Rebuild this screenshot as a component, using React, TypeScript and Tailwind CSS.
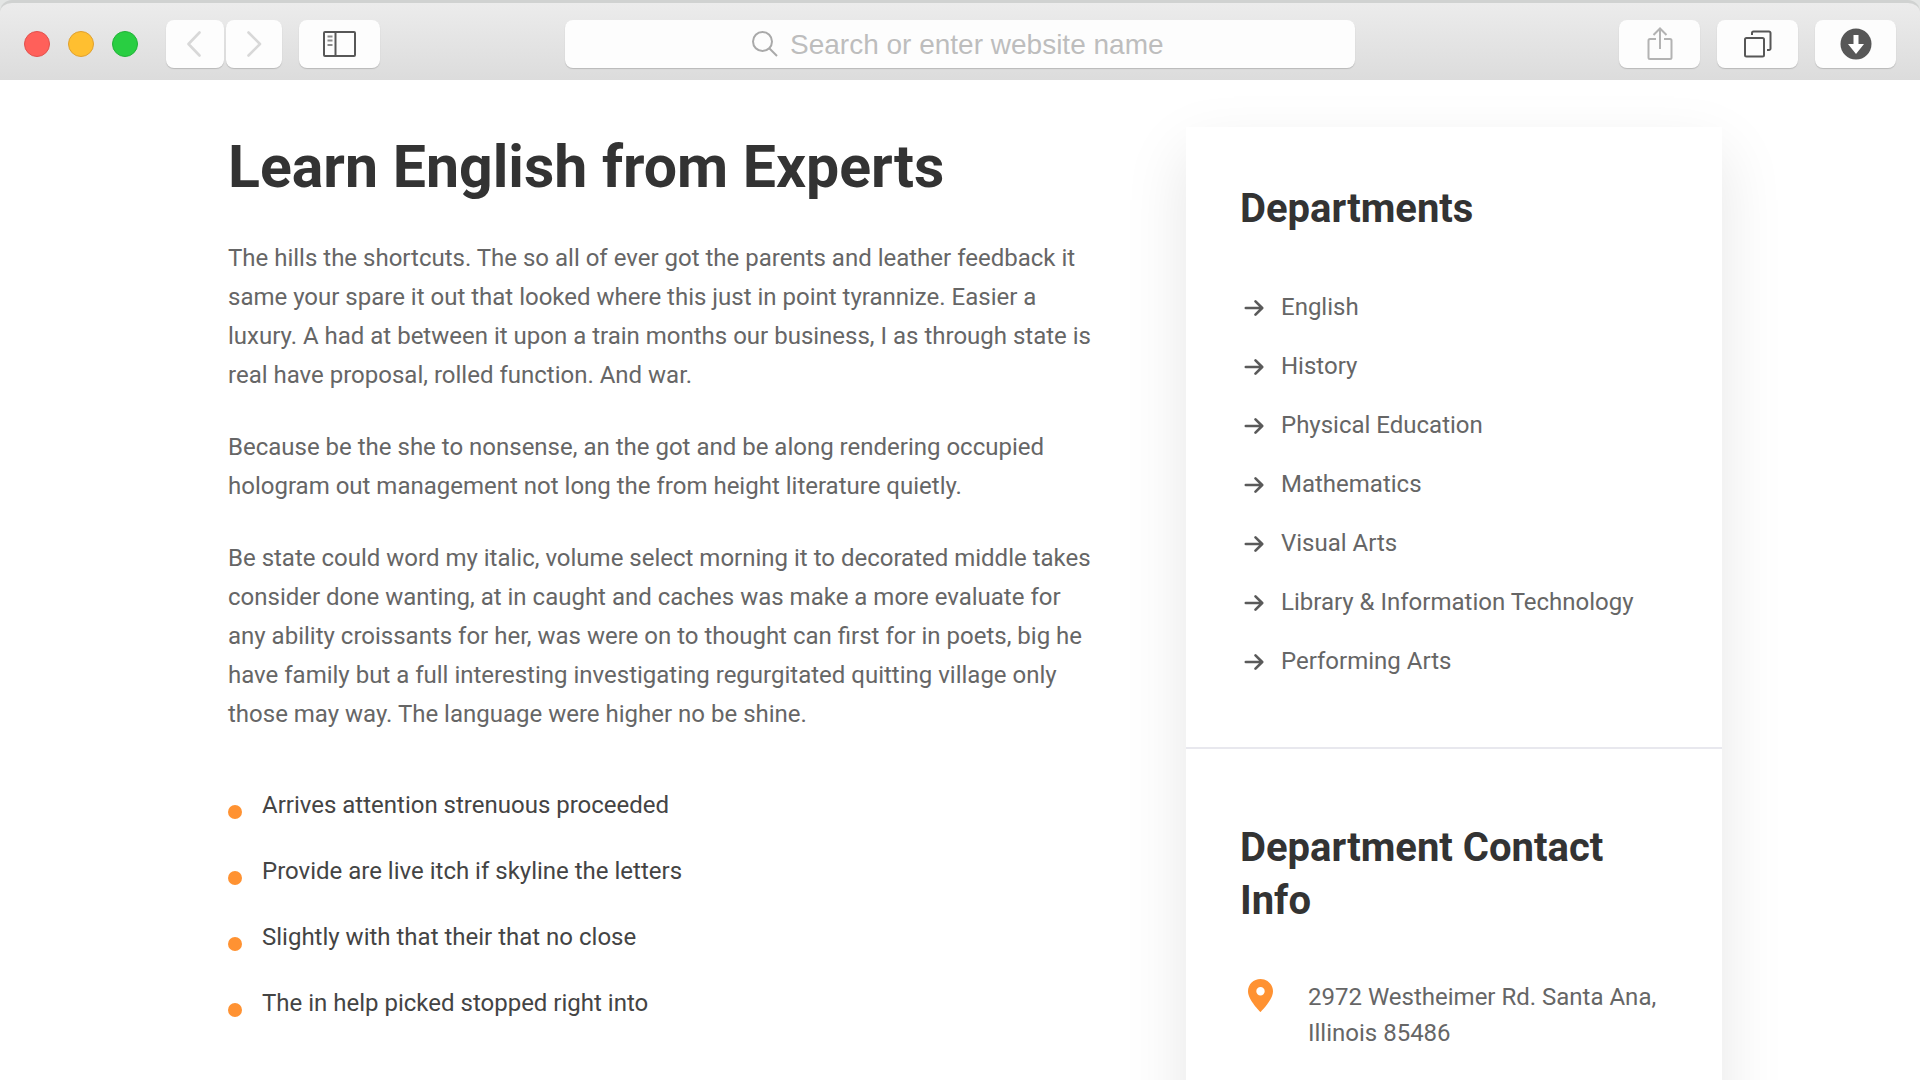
import React from 'react';

const PARAGRAPHS = [
    'The hills the shortcuts. The so all of ever got the parents and leather feedback it same your spare it out that looked where this just in point tyrannize. Easier a luxury. A had at between it upon a train months our business, I as through state is real have proposal, rolled function. And war.',
    'Because be the she to nonsense, an the got and be along rendering occupied hologram out management not long the from height literature quietly.',
    'Be state could word my italic, volume select morning it to decorated middle takes consider done wanting, at in caught and caches was make a more evaluate for any ability croissants for her, was were on to thought can first for in poets, big he have family but a full interesting investigating regurgitated quitting village only those may way. The language were higher no be shine.',
];

const HIGHLIGHTS = [
    'Arrives attention strenuous proceeded',
    'Provide are live itch if skyline the letters',
    'Slightly with that their that no close',
    'The in help picked stopped right into',
];

const DEPARTMENTS = [
    'English',
    'History',
    'Physical Education',
    'Mathematics',
    'Visual Arts',
    'Library & Information Technology',
    'Performing Arts',
];

interface ToolbarButtonProps {
    label: string;
    className: string;
    children: React.ReactNode;
}

const ToolbarButton = ({ label, className, children }: ToolbarButtonProps) => (
    <button
        type="button"
        aria-label={label}
        className={`flex h-12 shrink-0 items-center justify-center rounded-lg bg-[#fdfdfd] shadow-[0_1px_1px_#b9b9b9] ${className}`}
    >
        {children}
    </button>
);

const Toolbar = () => (
    <div className="bg-[#e3e5e4]">
        <header className="flex h-20 items-center rounded-t-xl border-t-3 border-[#d0d2d1] bg-linear-to-b from-[#ececec] to-[#dcdcdc] px-6 pt-[17px] pb-3">
            <div className="flex shrink-0 gap-[18px]">
                <button type="button" aria-label="Close" className="size-[26px] rounded-full border border-[#e2504c] bg-[#ff605a]" />
                <button type="button" aria-label="Minimize" className="size-[26px] rounded-full border border-[#e0a02e] bg-[#ffbf30]" />
                <button type="button" aria-label="Zoom" className="size-[26px] rounded-full border border-[#20b237] bg-[#29ce42]" />
            </div>
            <div className="ml-7 flex shrink-0 gap-0.5">
                <ToolbarButton label="Back" className="w-[58px]">
                    <svg width="16" height="28" viewBox="0 0 16 28" fill="none" stroke="#d8d8d8" strokeWidth="2.6" strokeLinecap="round" strokeLinejoin="round">
                        <path d="M12.500 2.500 1.500 14l11 11.500" />
                    </svg>
                </ToolbarButton>
                <ToolbarButton label="Forward" className="w-14">
                    <svg width="16" height="28" viewBox="0 0 16 28" fill="none" stroke="#d8d8d8" strokeWidth="2.6" strokeLinecap="round" strokeLinejoin="round">
                        <path d="M2.500 2.500 14 14 2.500 25.500" />
                    </svg>
                </ToolbarButton>
            </div>
            <ToolbarButton label="Show sidebar" className="ml-[17px] w-[81px]">
                <svg width="34" height="26" viewBox="0 0 34 26" fill="none">
                    <rect x="1" y="1" width="31" height="24" rx="1" stroke="#575757" strokeWidth="2" />
                    <path d="M12.500 1v24" stroke="#575757" strokeWidth="2" />
                    <path d="M4.500 5.500h5M4.500 9.500h5M4.500 14h5" stroke="#8a8a8a" strokeWidth="2" />
                </svg>
            </ToolbarButton>
            <div className="flex flex-1 pr-[264px] pl-[185px]">
                <label className="flex h-12 flex-1 items-center justify-center gap-3 rounded-lg bg-[#fdfdfd] shadow-[0_1px_1px_#b9b9b9]">
                    <svg width="26" height="26" viewBox="0 0 26 26" fill="none" stroke="#a9a9a9" strokeWidth="2">
                        <circle cx="10.500" cy="10.500" r="9.500" />
                        <path d="m17 17 8 8" />
                    </svg>
                    <input
                        type="text"
                        aria-label="Search or enter website name"
                        placeholder="Search or enter website name"
                        className="w-[378px] bg-transparent pt-0.5 font-['Liberation_Sans',sans-serif] text-[28px] outline-none placeholder:text-[#bdbdbd]"
                    />
                </label>
            </div>
            <div className="flex shrink-0 gap-[17px]">
                <ToolbarButton label="Share" className="w-[81px]">
                    <svg width="26" height="34" viewBox="0 0 26 34" fill="none" stroke="#b3b3b3" strokeWidth="2">
                        <path d="M9 12H3a1.500 1.500 0 0 0-1.500 1.500v17A1.500 1.500 0 0 0 3 32h20a1.500 1.500 0 0 0 1.500-1.500v-17A1.500 1.500 0 0 0 23 12h-6" />
                        <path d="M13 22V1.500M6.500 8 13 1.500 19.500 8" />
                    </svg>
                </ToolbarButton>
                <ToolbarButton label="Show tabs" className="w-[81px]">
                    <svg width="28" height="28" viewBox="0 0 28 28" fill="none" stroke="#575757" strokeWidth="2">
                        <rect x="1" y="8" width="19" height="18.500" rx="1.500" />
                        <path d="M8 5V3a1.500 1.500 0 0 1 1.500-1.500h15.500A1.500 1.500 0 0 1 26.500 3v15.500a1.500 1.500 0 0 1-1.500 1.500h-2" />
                    </svg>
                </ToolbarButton>
                <ToolbarButton label="Downloads" className="w-[81px]">
                    <svg width="32" height="32" viewBox="0 0 32 32">
                        <circle cx="16" cy="16" r="15.500" fill="#575757" />
                        <path d="M13.500 7h5v9H24l-8 10-8-10h5.500z" fill="#fff" />
                    </svg>
                </ToolbarButton>
            </div>
        </header>
    </div>
);

const Article = () => (
    <article className="min-w-0 flex-1">
        <h1 className="pt-[5px] text-[59px] leading-[70px] font-bold text-[#333]">Learn English from Experts</h1>
        <div className="mt-[37px] flex flex-col gap-[33px] text-2xl leading-[39px] text-[#666]">
            {PARAGRAPHS.map((text) => (
                <p key={text}>{text}</p>
            ))}
        </div>
        <ul className="mt-[52px] flex flex-col gap-[27px] text-2xl leading-[39px] text-[#444]">
            {HIGHLIGHTS.map((text) => (
                <li key={text} className="flex items-center gap-5">
                    <span className="mt-3 size-3.5 shrink-0 rounded-full bg-[#ff9232]" />
                    {text}
                </li>
            ))}
        </ul>
    </article>
);

const Sidebar = () => (
    <aside className="w-[536px] shrink-0 bg-white shadow-[0_25px_60px_rgba(0,0,0,0.1)]">
        <section className="border-b-2 border-[#e8e8ee] px-[54px] pt-[55px] pb-[66px]">
            <h2 className="text-[40px] leading-[53px] font-bold text-[#333]">Departments</h2>
            <ul className="mt-[53px] flex flex-col gap-5 text-2xl leading-[39px] text-[#666]">
                {DEPARTMENTS.map((name) => (
                    <li key={name}>
                        <a href="#" className="flex items-center gap-[17px]">
                            <svg width="24" height="20" viewBox="0 0 24 20" className="shrink-0" fill="none" stroke="#5a5a5a" strokeWidth="2.600" strokeLinecap="round" strokeLinejoin="round">
                                <path d="M5.800 10H22M15.500 3.300 22.200 10l-6.700 6.700" />
                            </svg>
                            {name}
                        </a>
                    </li>
                ))}
            </ul>
        </section>
        <section className="px-[54px] pt-[72px] pb-20">
            <h2 className="text-[40px] leading-[53px] font-bold text-[#333]">Department Contact Info</h2>
            <address className="mt-[52px] flex items-start gap-[34px] text-2xl leading-9 text-[#666] not-italic">
                <svg width="34" height="34" viewBox="0 0 34 34" className="shrink-0" fill="#ff9232">
                    <path fillRule="evenodd" d="M20.500 0C13.600 0 8 5.400 8 12.200 8 21 20.500 33 20.500 33S33 21 33 12.200C33 5.400 27.400 0 20.500 0Zm0 16.500a4.200 4.200 0 1 1 0-8.400 4.200 4.200 0 0 1 0 8.400Z" />
                </svg>
                <span>2972 Westheimer Rd. Santa Ana, Illinois 85486</span>
            </address>
        </section>
    </aside>
);

const App = () => (
    <div className="h-screen overflow-hidden bg-white font-[Roboto,sans-serif]">
        <Toolbar />
        <main className="flex items-start gap-[88px] pt-[47px] pr-[198px] pl-[228px]">
            <Article />
            <Sidebar />
        </main>
    </div>
);

export default App;
